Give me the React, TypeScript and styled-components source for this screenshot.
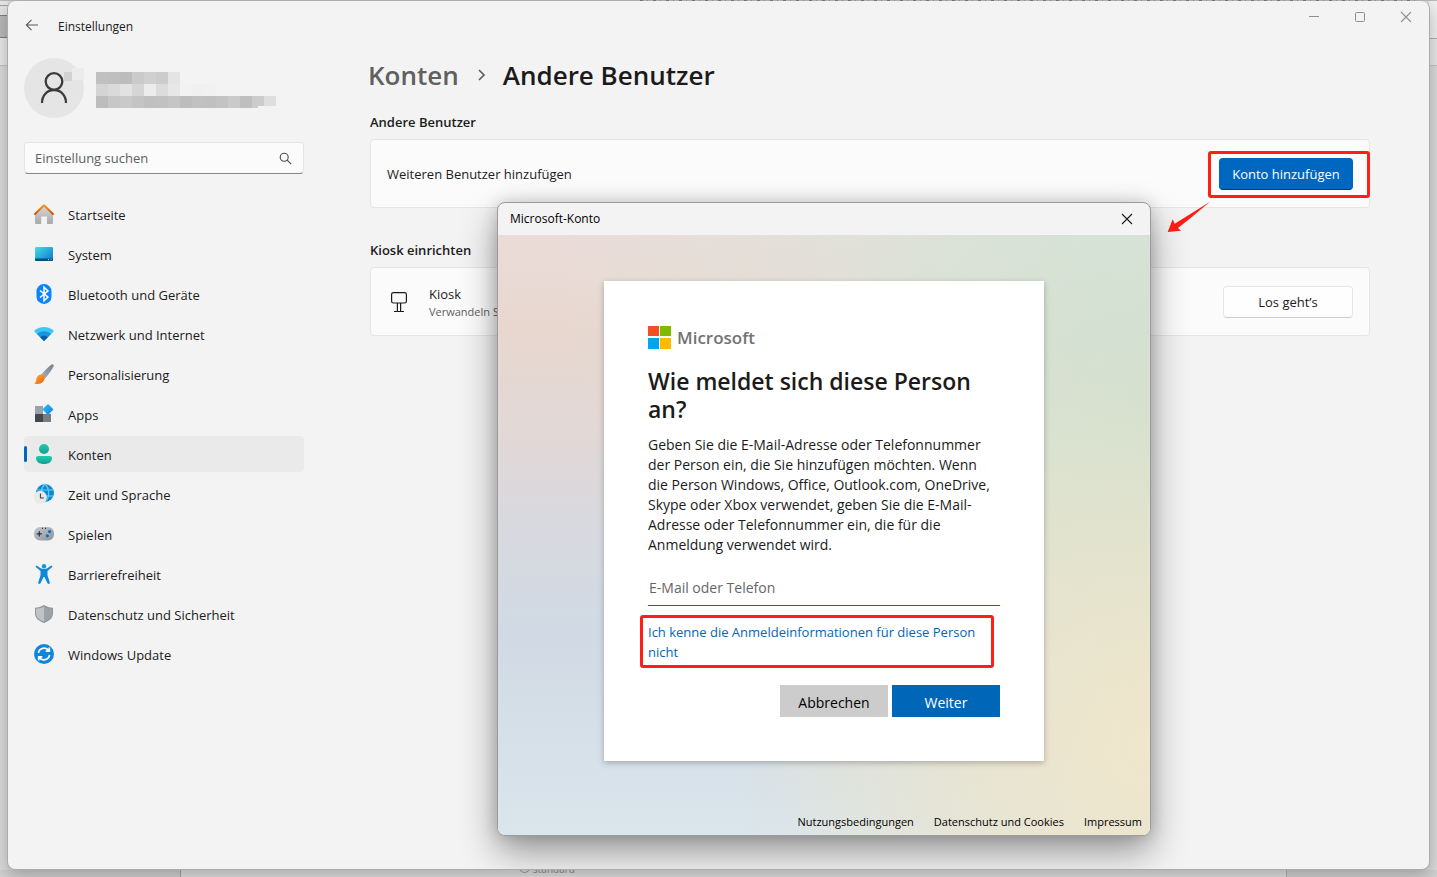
import React from 'react';
import styled, { createGlobalStyle } from 'styled-components';

const GlobalStyle = createGlobalStyle`
  *, *::before, *::after { box-sizing: border-box; }
  body { margin: 0; }
  body, button, input {
    font-family: "Open Sans", "Noto Sans", sans-serif;
    font-size: 13px;
    line-height: 20px;
    color: #1b1b1b;
  }
  h1, h2, p, ul { margin: 0; padding: 0; }
  button { cursor: pointer; }
`;

/* ---------- desktop behind the window ---------- */

const Desktop = styled.div`
  min-height: 100vh;
  display: flex;
  flex-direction: column;
  padding: 1px 7px 0 7px;
  background:
    repeating-linear-gradient(90deg, #7d7b7c 0 3px, transparent 3px 7px, #99949a 7px 8px, transparent 8px 13px) 640px 0 / 780px 1px no-repeat,
    linear-gradient(#b8b8b8, #b8b8b8) 0 0 / 100% 1px no-repeat,
    linear-gradient(#e6e6e6 0 5px, #a0a0a0 5px 6px, #e4e4e4 6px 15px, #7f7f7f 15px 16px, #bababa 16px 37px, #7f7f7f 37px 38px, #e9e9e9 38px 65px, #c4c4c4 65px 66px, transparent 66px) 0 0 / 8px 66px no-repeat,
    linear-gradient(#f0f0f0 0 38px, #b0b0b0 38px 39px, #e9e9e9 39px 65px, #c4c4c4 65px 66px) 100% 0 / 8px 66px no-repeat,
    #dcdcdc;
`;

const Taskstrip = styled.div`
  height: 7px;
  margin: 0 -7px;
  padding: 0 150px 0 180px;
  display: flex;
  overflow: hidden;
  background: #d2d2d2;
`;

const StripPanel = styled.div`
  flex: 1;
  display: flex;
  align-items: flex-end;
  gap: 3px;
  padding-left: 338px;
  border-left: 1px solid #a5a5a5;
  border-right: 1px solid #b5b5b5;
  background: #e2e2e2;
  color: #8a8a8a;
  font-size: 10px;
  line-height: 12px;
`;

const StripRadio = styled.span`
  width: 11px;
  height: 11px;
  margin-bottom: 4px;
  border: 1px solid #999;
  border-radius: 50%;
`;

const StripText = styled.span`
  padding-bottom: 2px;
`;

/* ---------- settings window ---------- */

const Window = styled.div`
  position: relative;
  flex: 1;
  border: 1px solid #ababab;
  border-top: 0;
  border-radius: 8px;
  background: #f3f3f3;
  box-shadow: 0 6px 18px rgba(0, 0, 0, 0.25);
  overflow: hidden;
`;

const TitleBar = styled.header`
  display: flex;
  justify-content: space-between;
  align-items: flex-start;
`;

const TitleLeft = styled.div`
  display: flex;
  align-items: center;
  gap: 18px;
  height: 48px;
  padding-left: 16px;
  font-size: 12px;
  line-height: 16px;
`;

const AppName = styled.span`
  padding-top: 3px;
`;

const IconButton = styled.button<{ $w: number; $h: number }>`
  display: flex;
  align-items: center;
  justify-content: center;
  width: ${p => p.$w}px;
  height: ${p => p.$h}px;
  padding: 0;
  border: 0;
  background: transparent;
`;

const WindowControls = styled.div`
  display: flex;
`;

const Body = styled.div`
  display: flex;
  padding: 9px 0 32px 16px;
`;

const Sidebar = styled.aside`
  flex: 0 0 280px;
`;

const Profile = styled.div`
  display: flex;
  align-items: center;
  gap: 12px;
  height: 60px;
`;

const Avatar = styled.div`
  display: flex;
  align-items: center;
  justify-content: center;
  width: 60px;
  height: 60px;
  border-radius: 50%;
  background: #e5e5e5;
`;

const SearchBox = styled.label`
  display: flex;
  align-items: center;
  height: 32px;
  margin-top: 24px;
  padding: 0 11px 0 10px;
  border: 1px solid #e5e5e5;
  border-bottom-color: #868686;
  border-radius: 4px;
  background: #fbfbfb;
`;

const SearchInput = styled.input`
  flex: 1;
  min-width: 0;
  padding: 0;
  border: 0;
  outline: 0;
  background: transparent;
  &::placeholder { color: #606060; opacity: 1; }
`;

const NavList = styled.ul`
  display: flex;
  flex-direction: column;
  gap: 4px;
  margin-top: 22px;
  list-style: none;
`;

const NavLink = styled.a<{ $active?: boolean }>`
  position: relative;
  display: flex;
  align-items: center;
  gap: 12px;
  height: 36px;
  padding: 2px 0 0 8px;
  border-radius: 4px;
  background: ${p => (p.$active ? '#eaeaea' : 'transparent')};
  color: #1b1b1b;
  text-decoration: none;

  &::before {
    content: "";
    display: ${p => (p.$active ? 'block' : 'none')};
    position: absolute;
    left: 0;
    top: 10px;
    width: 3px;
    height: 16px;
    border-radius: 2px;
    background: #0067c0;
  }
`;

const NavIcon = styled.svg`
  width: 24px;
  height: 24px;
  margin-bottom: 2px;
`;

const Main = styled.main`
  flex: 1;
  padding: 0 59px 0 64px;
`;

const Breadcrumb = styled.div`
  display: flex;
  align-items: center;
  gap: 18px;
  height: 34px;
`;

const CrumbLink = styled.a`
  font-size: 26px;
  line-height: 34px;
  font-weight: 600;
  color: #606060;
  text-decoration: none;
`;

const Title = styled.h1`
  font-size: 26px;
  line-height: 34px;
  font-weight: 600;
`;

const Section = styled.section<{ $gap: number }>`
  margin: ${p => p.$gap}px 0 0 2px;
`;

const SectionTitle = styled.h2`
  font-size: 13px;
  line-height: 20px;
  font-weight: 600;
`;

const Card = styled.div`
  display: flex;
  align-items: center;
  justify-content: space-between;
  height: 69px;
  margin-top: 7px;
  padding: 0 16px;
  border: 1px solid #e5e5e5;
  border-radius: 4px;
  background: #fbfbfb;
`;

const KioskInfo = styled.div`
  display: flex;
  align-items: center;
  gap: 18px;
`;

const Caption = styled.p`
  font-size: 11px;
  line-height: 16px;
  color: #606060;
`;

const Marked = styled.div`
  position: relative;

  &::after {
    content: "";
    position: absolute;
    inset: -7px -17px -8px -11px;
    border: 3px solid #ff1f14;
    border-radius: 3px;
    pointer-events: none;
  }
`;

const Arrow = styled.svg`
  position: absolute;
  left: -53px;
  top: 42px;
  width: 45px;
  height: 34px;
`;

const Button = styled.button<{ $primary?: boolean }>`
  width: ${p => (p.$primary ? 134 : 130)}px;
  height: 32px;
  padding: 0;
  border: 1px solid ${p => (p.$primary ? '#0067c0' : '#e6e6e6')};
  border-bottom-color: ${p => (p.$primary ? '#003e73' : '#cccccc')};
  border-radius: 4px;
  background: ${p => (p.$primary ? '#0067c0' : '#fefefe')};
  color: ${p => (p.$primary ? '#fff' : '#1b1b1b')};
`;

/* ---------- sign-in dialog ---------- */

const Dialog = styled.div`
  position: absolute;
  left: 489px;
  top: 201px;
  width: 654px;
  border: 1px solid #9c9c9c;
  border-radius: 8px;
  background: #f3f3f3;
  box-shadow: 0 16px 36px rgba(0, 0, 0, 0.38), 0 0 16px rgba(0, 0, 0, 0.16);
  overflow: hidden;
`;

const DialogBar = styled.div`
  display: flex;
  align-items: center;
  justify-content: space-between;
  height: 32px;
  padding-left: 12px;
  font-size: 12px;
  line-height: 16px;
  color: #000;
`;

const DialogBody = styled.div`
  display: flex;
  flex-direction: column;
  padding-top: 46px;
  background:
    radial-gradient(circle at 100% 85%, #efe6cb 0%, rgba(239, 230, 203, 0) 50%),
    radial-gradient(circle at 100% 32%, #d1dfcf 0%, rgba(209, 223, 207, 0) 45%),
    radial-gradient(circle at 95% 0%, #d9e5da 0%, rgba(217, 229, 218, 0) 65%),
    radial-gradient(circle at 100% 60%, #e2e2d0 0%, rgba(226, 226, 208, 0) 60%),
    linear-gradient(180deg, #ebdcd9 0%, #e7d7cf 16%, #e2d8d6 32%, #d8d9de 48%, #d1dae4 66%, #dae5ec 100%);
`;

const SignIn = styled.form`
  align-self: center;
  width: 440px;
  padding: 45px 44px 44px;
  background: #fff;
  box-shadow: 0 2px 6px rgba(0, 0, 0, 0.25);
`;

const Brand = styled.div`
  display: flex;
  align-items: center;
  gap: 5px;
  height: 24px;
  font-size: 17px;
  line-height: 24px;
  font-weight: 600;
  color: #737373;
`;

const DialogTitle = styled.h2`
  margin-top: 17px;
  font-size: 23px;
  line-height: 28px;
  font-weight: 600;
`;

const Intro = styled.p`
  margin-top: 12px;
  font-size: 14px;
  line-height: 20px;
  white-space: nowrap;
`;

const Field = styled.input`
  display: block;
  width: 100%;
  height: 36px;
  margin-top: 15px;
  padding: 0 1px;
  border: 0;
  border-bottom: 1px solid #0067b8;
  border-radius: 0;
  outline: 0;
  background: transparent;
  font-size: 14px;
  &::placeholder { color: #666; opacity: 1; }
`;

const HintFrame = styled.div`
  position: relative;
  margin-top: 16px;

  &::after {
    content: "";
    position: absolute;
    inset: -7px 6px -6px -8px;
    border: 3px solid #ff1f14;
    border-radius: 3px;
    pointer-events: none;
  }
`;

const HintLink = styled.a`
  color: #0067b8;
  text-decoration: none;
`;

const Actions = styled.div`
  display: flex;
  justify-content: flex-end;
  gap: 4px;
  margin-top: 23px;
`;

const FlatButton = styled.button<{ $primary?: boolean }>`
  width: 108px;
  height: 32px;
  padding: 3px 0 0;
  border: 0;
  font-size: 14px;
  background: ${p => (p.$primary ? '#0067b8' : '#cccccc')};
  color: ${p => (p.$primary ? '#fff' : '#000')};
`;

const LegalLinks = styled.nav`
  display: flex;
  justify-content: flex-end;
  gap: 20px;
  margin-top: 48px;
  padding: 4px 8px;
`;

const LegalLink = styled.a`
  font-size: 11px;
  line-height: 18px;
  color: #000;
  text-decoration: none;
`;

/* ---------- drawings ---------- */

const BackIcon = () => (
  <svg width="14" height="14" viewBox="0 0 14 14" fill="none" stroke="#5a5a5a" strokeWidth="1.1">
    <path d="M13 7H1.5M6.5 1.8L1.3 7l5.2 5.2" />
  </svg>
);

const CloseIcon = ({ color }: { color: string }) => (
  <svg width="12" height="12" viewBox="0 0 12 12" fill="none" stroke={color} strokeWidth="1.1">
    <path d="M1 1l10 10M11 1L1 11" />
  </svg>
);

const PersonIcon = () => (
  <svg width="30" height="32" viewBox="0 0 30 32" fill="none" stroke="#3c3c3c" strokeWidth="2.3">
    <circle cx="15" cy="9.5" r="8.3" />
    <path d="M3 31C3 23.500 8 18 15 18S27 23.500 27 31" />
  </svg>
);

const MOSAIC = [
  ['#c0c0c0', '#bfbfbf', '#bcbcbc', '#cacaca', '#d0d0d0', '#cccccc', '#e4e4e4'],
  ['#d4d4d4', '#dadada', '#e2e2e2', '#d5d5d5', '#ececec', '#dcdcdc', '#e7e7e7', '#f2f2f2', '#f0f0f0', '#f1f1f1'],
  ['#bdbdbd', '#c7c7c7', '#c9c9c9', '#c4c4c4', '#c0c0c0', '#c1c1c1', '#c5c5c5', '#bdbdbd', '#c1c1c1', '#c0c0c0', '#c3c3c3', '#cacaca', '#bfbfbf', '#cdcdcd'],
];

const Mosaic = () => (
  <svg width="216" height="40" viewBox="-36 -4 216 40" shapeRendering="crispEdges" style={{ marginLeft: -36 }}>
    <rect x="-32" y="0" width="8" height="9" fill="#d2d2d2" />
    <rect x="-24" y="-4" width="12" height="12" fill="#ececec" />
    {MOSAIC.map((row, y) =>
      row.map((c, x) => <rect key={`${x}-${y}`} x={x * 12} y={y * 12} width="12" height="12" fill={c} />),
    )}
    <rect x="162" y="24" width="6" height="12" fill="#f3f3f3" />
    <rect x="156" y="24" width="12" height="10" fill="#cccccc" />
    <rect x="168" y="24" width="12" height="10" fill="#dedede" />
  </svg>
);

const SearchIcon = () => (
  <svg width="13" height="13" viewBox="0 0 13 13" fill="none" stroke="#4a4a4a" strokeWidth="1.1">
    <circle cx="5.2" cy="5.2" r="4" />
    <path d="M8.2 8.2l4 4" />
  </svg>
);

const KioskIcon = () => (
  <svg width="24" height="24" viewBox="0 0 24 24" fill="none" stroke="#1b1b1b" strokeWidth="1.2">
    <rect x="4.6" y="2.6" width="14.8" height="10.4" rx="1.8" />
    <path d="M10.4 13v8.4M13.6 13v8.4M7 21.5h10" />
  </svg>
);

const MicrosoftLogo = () => (
  <svg width="24" height="24" viewBox="0 0 24 24" shapeRendering="crispEdges">
    <rect x="0" y="0" width="11" height="10" fill="#f25022" />
    <rect x="12" y="0" width="11" height="10" fill="#7fba00" />
    <rect x="0" y="12" width="11" height="11" fill="#00a4ef" />
    <rect x="12" y="12" width="11" height="11" fill="#ffb900" />
  </svg>
);

const ICONS: Record<string, React.ReactNode> = {
  home: (
    <>
      <defs>
        <linearGradient id="wall" x1="0" y1="0" x2="0" y2="1"><stop stopColor="#d9d9d9" /><stop offset="1" stopColor="#a9a9a9" /></linearGradient>
        <linearGradient id="roof" x1="0" y1="0" x2="0" y2="1"><stop stopColor="#f59a1c" /><stop offset="1" stopColor="#d4510f" /></linearGradient>
      </defs>
      <path fill="url(#wall)" d="M3 11.5L12 3.2l9 8.3v9.3a1.2 1.2 0 0 1-1.2 1.2H15v-7.6H9.200V22H4.200A1.200 1.200 0 0 1 3 20.800z" />
      <path fill="none" stroke="url(#roof)" strokeWidth="2" strokeLinecap="round" strokeLinejoin="round" d="M3 12l9-8.800L21 12" />
    </>
  ),
  system: (
    <>
      <defs><linearGradient id="scr" x1="0" y1="0" x2="1" y2="1"><stop stopColor="#3fe0e6" /><stop offset="1" stopColor="#1173cf" /></linearGradient></defs>
      <rect x="3" y="5" width="18" height="14" rx="1.200" fill="url(#scr)" />
      <path fill="#0b4a77" d="M3 16.500h18v1.300a1.200 1.200 0 0 1-1.200 1.200H4.200A1.200 1.200 0 0 1 3 17.800z" />
      <path stroke="#9fdcff" strokeWidth="1" d="M16 17.700h1M18.500 17.700h1" />
    </>
  ),
  bluetooth: (
    <>
      <rect x="4.500" y="2" width="15" height="20" rx="7.300" fill="#0a84ff" />
      <path fill="none" stroke="#fff" strokeWidth="1.500" d="M8 8.500l8 6.600-4 3.600V5.300l4 3.600-8 6.600" />
    </>
  ),
  network: (
    <>
      <path fill="#3cc8f4" d="M2 9.200C7.500 3.600 16.500 3.600 22 9.200L12 19z" />
      <path fill="#1a93e0" d="M5 12.100c4-3.700 10-3.700 14 0L12 19z" />
      <path fill="#0c59a4" d="M8.200 15.200c2.200-2 5.400-2 7.600 0L12 19z" />
    </>
  ),
  brush: (
    <>
      <defs>
        <linearGradient id="hand" x1="1" y1="0" x2="0" y2="1"><stop stopColor="#77808a" /><stop offset="1" stopColor="#a9b2ba" /></linearGradient>
        <linearGradient id="tip" x1="0" y1="0" x2="1" y2="1"><stop stopColor="#ffb02e" /><stop offset="1" stopColor="#ec5b13" /></linearGradient>
      </defs>
      <path fill="url(#hand)" d="M19.200 2.700c1.600-1.300 3.300.1 2.300 1.900-2 3.800-4.800 7.800-8.100 11.600L9 13c2.900-4 6.600-7.500 10.200-10.300z" />
      <path fill="url(#tip)" d="M9.300 12.600c2.600.4 4.100 2.400 3.200 4.900-1.200 3.600-6 5.400-10.500 4 2.400-1.200 1.700-3.100 2.700-5.600.8-2.100 2.700-3.500 4.600-3.300z" />
    </>
  ),
  apps: (
    <>
      <defs><linearGradient id="dia" x1="0" y1="0" x2="1" y2="1"><stop stopColor="#31c4f8" /><stop offset="1" stopColor="#0d7ddd" /></linearGradient></defs>
      <rect x="3" y="4" width="8" height="8" fill="#9aa3ab" />
      <rect x="3" y="12" width="8" height="8" fill="#42484e" />
      <rect x="11" y="12" width="8" height="8" fill="#747c84" />
      <path fill="url(#dia)" d="M15.300 2.500a.9.900 0 0 1 1.300 0l4.300 4.300a.9.900 0 0 1 0 1.300l-4.300 4.300a.9.900 0 0 1-1.300 0L11 8.100a.9.900 0 0 1 0-1.300z" />
    </>
  ),
  accounts: (
    <>
      <defs><linearGradient id="acc" x1="0" y1="0" x2="0" y2="1"><stop stopColor="#22cbb0" /><stop offset="1" stopColor="#10a08f" /></linearGradient></defs>
      <circle cx="12" cy="7" r="5" fill="url(#acc)" />
      <path fill="url(#acc)" d="M6 14h12a2 2 0 0 1 2 2c0 3.900-3.300 6-8 6s-8-2.100-8-6a2 2 0 0 1 2-2z" />
    </>
  ),
  time: (
    <>
      <circle cx="13" cy="11" r="9" fill="#1487d4" />
      <path fill="none" stroke="#5fd4f4" strokeWidth="1.100" d="M5 8h16M5 14h16M13 2c-5 5-5 13 0 18M13 2c5 5 5 13 0 18" />
      <circle cx="8.300" cy="15.300" r="6.500" fill="#e9e9e9" />
      <path fill="none" stroke="#4b4b4b" strokeWidth="1.200" d="M8.500 11.500V16H12" />
    </>
  ),
  games: (
    <>
      <defs><linearGradient id="pad" x1="0" y1="0" x2="1" y2="1"><stop stopColor="#c3c9ce" /><stop offset="1" stopColor="#8c949b" /></linearGradient></defs>
      <rect x="2" y="5" width="20" height="13.500" rx="6" fill="url(#pad)" />
      <path stroke="#30363b" strokeWidth="1.300" d="M4.700 11.800h5.200M7.300 9.200v5.200M10 6.300h1M13 6.300h1" />
      <circle cx="17.600" cy="9.600" r="1.600" fill="#0a6fd0" />
      <circle cx="15.300" cy="13.800" r="1.600" fill="#0a6fd0" />
    </>
  ),
  access: (
    <>
      <circle cx="12" cy="4.200" r="2.200" fill="#1795e4" />
      <path fill="#1088da" d="M5 3.700l3.600 2.600c2 1 4.800 1 6.800 0L19 3.700c1.200-.5 1.700.9.900 1.600L15.500 9v4.200l2.300 7.300c.2 1.500-1.600 2-2.300.8L12.400 15h-.8l-3.100 6.300c-.7 1.200-2.500.7-2.300-.8l2.300-7.300V9L4.100 5.300C3.300 4.600 3.800 3.200 5 3.700z" />
    </>
  ),
  shield: (
    <>
      <path fill="#8f969d" d="M12 3c2.700 1.700 5.600 2.500 9 2.700v5.500c0 4.900-3.700 7.700-9 9.800-5.300-2.100-9-4.900-9-9.800V5.700C6.400 5.500 9.300 4.700 12 3z" />
      <path fill="#bec3c8" d="M12 4.400v15.400C7.300 17.800 4 15.400 4 11.200V6.600c3-.2 5.500-.8 8-2.200z" />
      <path fill="#9ba2a8" d="M12 4.400v15.400c4.700-2 8-4.400 8-8.600V6.600c-3-.2-5.500-.8-8-2.200z" />
    </>
  ),
  update: (
    <>
      <circle cx="12" cy="12" r="10" fill="#0f86dc" />
      <path fill="none" stroke="#fff" strokeWidth="1.700" d="M6.400 11a5.800 5.800 0 0 1 10.400-2.400M17.600 13A5.800 5.800 0 0 1 7.200 15.400M17.300 5.500v3.600h-3.600M6.700 18.500v-3.600h3.600" />
    </>
  ),
};

const NAV = [
  ['home', 'Startseite'],
  ['system', 'System'],
  ['bluetooth', 'Bluetooth und Geräte'],
  ['network', 'Netzwerk und Internet'],
  ['brush', 'Personalisierung'],
  ['apps', 'Apps'],
  ['accounts', 'Konten'],
  ['time', 'Zeit und Sprache'],
  ['games', 'Spielen'],
  ['access', 'Barrierefreiheit'],
  ['shield', 'Datenschutz und Sicherheit'],
  ['update', 'Windows Update'],
];

export default function App() {
  return (
    <Desktop>
      <GlobalStyle />
      <Window>
        <TitleBar>
          <TitleLeft>
            <IconButton $w={16} $h={32} aria-label="Zurück"><BackIcon /></IconButton>
            <AppName>Einstellungen</AppName>
          </TitleLeft>
          <WindowControls>
            <IconButton $w={46} $h={32} aria-label="Minimieren">
              <svg width="12" height="12" viewBox="0 0 12 12" stroke="#8f8f8f"><path d="M1 5.500h10" /></svg>
            </IconButton>
            <IconButton $w={46} $h={32} aria-label="Maximieren">
              <svg width="12" height="12" viewBox="0 0 12 12" fill="none" stroke="#8f8f8f"><rect x="1.500" y="1.500" width="9" height="9" rx="1" /></svg>
            </IconButton>
            <IconButton $w={46} $h={32} aria-label="Schließen"><CloseIcon color="#8f8f8f" /></IconButton>
          </WindowControls>
        </TitleBar>

        <Body>
          <Sidebar>
            <Profile>
              <Avatar><PersonIcon /></Avatar>
              <Mosaic />
            </Profile>
            <SearchBox>
              <SearchInput type="text" placeholder="Einstellung suchen" aria-label="Einstellung suchen" />
              <SearchIcon />
            </SearchBox>
            <NavList>
              {NAV.map(([icon, label]) => (
                <li key={icon}>
                  <NavLink href="#" $active={icon === 'accounts'}>
                    <NavIcon viewBox="0 0 24 24">{ICONS[icon]}</NavIcon>
                    {label}
                  </NavLink>
                </li>
              ))}
            </NavList>
          </Sidebar>

          <Main>
            <Breadcrumb>
              <CrumbLink href="#">Konten</CrumbLink>
              <svg width="8" height="12" viewBox="0 0 8 12" fill="none" stroke="#606060" strokeWidth="1.700"><path d="M2 1l5 5-5 5" /></svg>
              <Title>Andere Benutzer</Title>
            </Breadcrumb>

            <Section $gap={20}>
              <SectionTitle>Andere Benutzer</SectionTitle>
              <Card>
                <span>Weiteren Benutzer hinzufügen</span>
                <Marked>
                  <Button $primary>Konto hinzufügen</Button>
                  <Arrow viewBox="140 600 135 102">
                    <path fill="#ff1f14" d="M272 605L166 671l-6-13-15 38 40-4-9-8 37-29z" />
                  </Arrow>
                </Marked>
              </Card>
            </Section>

            <Section $gap={32}>
              <SectionTitle>Kiosk einrichten</SectionTitle>
              <Card>
                <KioskInfo>
                  <KioskIcon />
                  <div>
                    <p>Kiosk</p>
                    <Caption>Verwandeln Sie</Caption>
                  </div>
                </KioskInfo>
                <Button>Los geht’s</Button>
              </Card>
            </Section>
          </Main>
        </Body>

        <Dialog role="dialog" aria-label="Microsoft-Konto">
          <DialogBar>
            <span>Microsoft-Konto</span>
            <IconButton $w={46} $h={32} aria-label="Schließen"><CloseIcon color="#1b1b1b" /></IconButton>
          </DialogBar>
          <DialogBody>
            <SignIn onSubmit={e => e.preventDefault()}>
              <Brand><MicrosoftLogo />Microsoft</Brand>
              <DialogTitle>Wie meldet sich diese Person an?</DialogTitle>
              <Intro>
                Geben Sie die E-Mail-Adresse oder Telefonnummer<br />
                der Person ein, die Sie hinzufügen möchten. Wenn<br />
                die Person Windows, Office, Outlook.com, OneDrive,<br />
                Skype oder Xbox verwendet, geben Sie die E-Mail-<br />
                Adresse oder Telefonnummer ein, die für die<br />
                Anmeldung verwendet wird.
              </Intro>
              <Field type="text" placeholder="E-Mail oder Telefon" aria-label="E-Mail oder Telefon" />
              <HintFrame>
                <HintLink href="#">Ich kenne die Anmeldeinformationen für diese Person<br />nicht</HintLink>
              </HintFrame>
              <Actions>
                <FlatButton type="button">Abbrechen</FlatButton>
                <FlatButton type="submit" $primary>Weiter</FlatButton>
              </Actions>
            </SignIn>
            <LegalLinks>
              <LegalLink href="#">Nutzungsbedingungen</LegalLink>
              <LegalLink href="#">Datenschutz und Cookies</LegalLink>
              <LegalLink href="#">Impressum</LegalLink>
            </LegalLinks>
          </DialogBody>
        </Dialog>
      </Window>
      <Taskstrip>
        <StripPanel>
          <StripRadio />
          <StripText>standard</StripText>
        </StripPanel>
      </Taskstrip>
    </Desktop>
  );
}
